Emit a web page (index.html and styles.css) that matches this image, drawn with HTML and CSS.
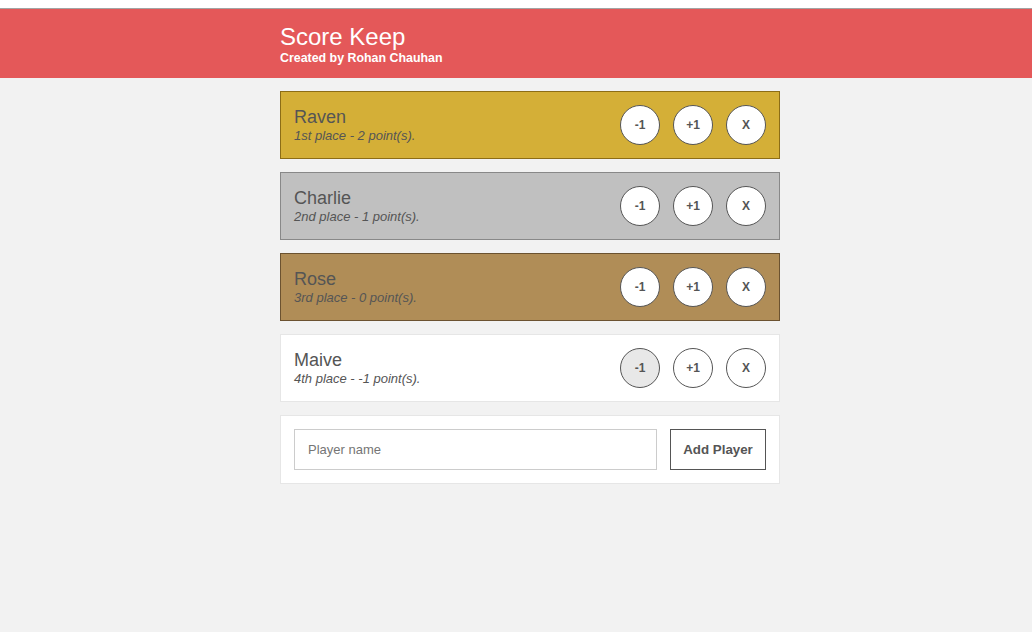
FILE: index.html
```html
<!DOCTYPE html>
<html>
<head>
<meta charset="utf-8">
<link rel="stylesheet" href="styles.css">
</head>
<body>
<div class="topstrip"></div>
<header class="header">
  <div class="wrap">
    <h1 class="title">Score Keep</h1>
    <div class="subtitle">Created by Rohan Chauhan</div>
  </div>
</header>
<main class="wrap main">
  <div class="player gold">
    <div class="info">
      <div class="name">Raven</div>
      <div class="stats">1st place - 2 point(s).</div>
    </div>
    <div class="actions">
      <button class="round">-1</button>
      <button class="round">+1</button>
      <button class="round">X</button>
    </div>
  </div>
  <div class="player silver">
    <div class="info">
      <div class="name">Charlie</div>
      <div class="stats">2nd place - 1 point(s).</div>
    </div>
    <div class="actions">
      <button class="round">-1</button>
      <button class="round">+1</button>
      <button class="round">X</button>
    </div>
  </div>
  <div class="player bronze">
    <div class="info">
      <div class="name">Rose</div>
      <div class="stats">3rd place - 0 point(s).</div>
    </div>
    <div class="actions">
      <button class="round">-1</button>
      <button class="round">+1</button>
      <button class="round">X</button>
    </div>
  </div>
  <div class="player plain">
    <div class="info">
      <div class="name">Maive</div>
      <div class="stats">4th place - -1 point(s).</div>
    </div>
    <div class="actions">
      <button class="round disabled" disabled>-1</button>
      <button class="round">+1</button>
      <button class="round">X</button>
    </div>
  </div>
  <form class="addform">
    <input class="nameinput" type="text" placeholder="Player name">
    <button class="addbtn" type="button">Add Player</button>
  </form>
</main>
</body>
</html>
```
FILE: styles.css
```css
html, body {
  margin: 0;
  padding: 0;
}
body {
  background: #f2f2f2;
  font-family: "Liberation Sans", Arial, sans-serif;
  color: #555;
}
.topstrip {
  height: 8px;
  background: #fff;
  border-bottom: 1px solid #a3a3a3;
}
.header {
  background: #e45859;
  color: #fff;
  height: 69px;
  box-sizing: border-box;
  padding-top: 14px;
}
.wrap {
  width: 500px;
  margin-left: calc(50% - 236px);
}
.title {
  margin: 0;
  font-size: 24px;
  font-weight: normal;
  line-height: 28px;
}
.subtitle {
  font-size: 12.4px;
  font-weight: bold;
  line-height: 15px;
  margin-top: 0;
}
.main {
  padding-top: 13px;
  display: flex;
  flex-direction: column;
  gap: 13px;
}
.player {
  height: 68px;
  box-sizing: border-box;
  border: 1px solid #e6e6e6;
  background: #fff;
  display: flex;
  align-items: center;
  justify-content: space-between;
  padding: 0 13px;
}
.gold { background: #d4af37; border-color: #8c6d16; }
.silver { background: #c0c0c0; border-color: #888; }
.bronze { background: #b08d57; border-color: #6b5230; }
.name {
  font-size: 18px;
  line-height: 20px;
}
.stats {
  font-size: 13px;
  font-style: italic;
  line-height: 17px;
}
.actions {
  display: flex;
  gap: 13px;
}
.round {
  width: 40px;
  height: 40px;
  border-radius: 50%;
  border: 1px solid #555;
  background: #fff;
  color: #555;
  font-family: "Liberation Sans", Arial, sans-serif;
  font-weight: bold;
  font-size: 12px;
  padding: 0;
}
.round.disabled {
  background: #e8e8e8;
}
.addform {
  margin: 0;
  height: 69px;
  box-sizing: border-box;
  border: 1px solid #e6e6e6;
  background: #fff;
  display: flex;
  align-items: center;
  gap: 13px;
  padding: 0 13px;
}
.nameinput {
  flex: 1;
  height: 41px;
  box-sizing: border-box;
  border: 1px solid #ccc;
  padding: 0 13px;
  font-family: "Liberation Sans", Arial, sans-serif;
  font-size: 13px;
  color: #555;
  outline: none;
}
.nameinput::placeholder {
  color: #757575;
}
.addbtn {
  height: 41px;
  width: 96px;
  box-sizing: border-box;
  border: 1px solid #555;
  background: #fff;
  color: #555;
  font-family: "Liberation Sans", Arial, sans-serif;
  font-weight: bold;
  font-size: 13.33px;
  padding: 0;
}
```
